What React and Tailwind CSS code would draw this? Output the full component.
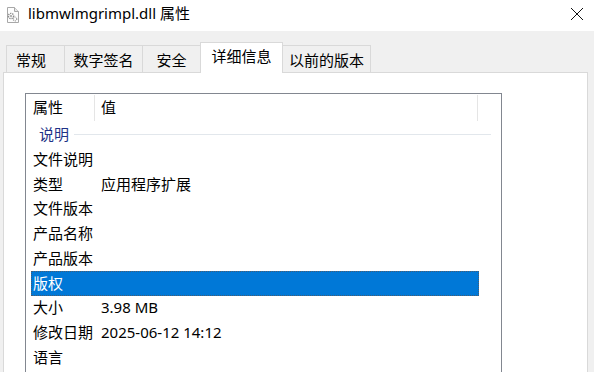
import React from "react";

const font = {
  fontFamily: '"Noto Sans", "Noto Sans CJK SC", sans-serif',
};

const tabs = [
  { label: "常规", w: "w-[59px] justify-start pl-[9px]" },
  { label: "数字签名", w: "w-[79px] justify-center" },
  { label: "安全", w: "w-[59px] justify-center" },
  { label: "详细信息", w: "w-[83px] justify-center", active: true },
  { label: "以前的版本", w: "w-[89px] justify-center" },
];

const rows = [
  ["文件说明", ""],
  ["类型", "应用程序扩展"],
  ["文件版本", ""],
  ["产品名称", ""],
  ["产品版本", ""],
  ["版权", "", true],
  ["大小", "3.98 MB"],
  ["修改日期", "2025-06-12 14:12"],
  ["语言", ""],
];

function DllIcon() {
  return (
    <svg width="14" height="16" viewBox="0 0 14 16">
      <path d="M1.5 0.5h7l4 4v11h-11z" fill="#fdfdfd" stroke="#a8a8a8" />
      <path d="M8.5 0.5v4h4" fill="#e8e8e8" stroke="#a8a8a8" />
      <circle cx="5" cy="9" r="2.6" fill="none" stroke="#8c8c8c" strokeWidth="1.4" strokeDasharray="1.3 0.9" />
      <circle cx="5" cy="9" r="1" fill="#9a9a9a" />
      <circle cx="9" cy="12" r="1.8" fill="none" stroke="#9c9c9c" strokeWidth="1.2" strokeDasharray="1 0.8" />
    </svg>
  );
}

export default function App() {
  return (
    <div
      className="w-[594px] h-[372px] overflow-hidden bg-[#f0f0f0] flex flex-col text-[15px] text-black"
      style={font}
    >
      {/* title bar */}
      <div className="h-[31px] bg-white flex items-center shrink-0">
        <div className="ml-[6px] mt-[-2px]">
          <DllIcon />
        </div>
        <span className="ml-[8px] mt-[-4px] leading-none">libmwlmgrimpl.dll 属性</span>
        <div className="ml-auto mr-[10px] mt-[-4px]">
          <svg width="14" height="14" viewBox="0 0 14 14">
            <path d="M1 1L13 13M13 1L1 13" stroke="#111" strokeWidth="1" />
          </svg>
        </div>
      </div>

      {/* tabs */}
      <div className="h-[41px] flex items-end pl-[6px] shrink-0">
        {tabs.map((t) =>
          t.active ? (
            <div
              key={t.label}
              className={`${t.w} h-[31px] bg-white border border-b-0 border-[#d9d9d9] -ml-px flex items-center leading-none relative z-10 -mb-px`}
            >
              <span className="mt-[-4px]">{t.label}</span>
            </div>
          ) : (
            <div
              key={t.label}
              className={`${t.w} h-[27px] border border-b-0 border-[#d9d9d9] -ml-px first:ml-0 flex items-center leading-none`}
            >
              <span className="mt-[2px]">{t.label}</span>
            </div>
          )
        )}
      </div>

      {/* page */}
      <div className="ml-[3px] w-[585px] flex-1 bg-white border border-[#d9d9d9] pl-[21px] pt-[20px]">
        <div className="w-[477px] h-[300px] border border-[#828790] bg-white">
          {/* header */}
          <div className="h-[27px] flex items-center">
            <div className="w-[69px] h-[26px] border-r border-[#e5e5e5] flex items-center pl-[7px] leading-none">
              属性
            </div>
            <div className="w-[383px] h-[26px] border-r border-[#e5e5e5] flex items-center pl-[6px] leading-none">
              值
            </div>
          </div>

          {/* group */}
          <div className="h-[26px] flex items-center pl-[13px] pr-[10px]">
            <span className="text-[#1e3287] leading-none">说明</span>
            <div className="flex-1 ml-[5px] h-px bg-[#e2e7ec]" />
          </div>

          {/* rows */}
          <div className="pl-[5px]">
            {rows.map(([k, v, sel]) => (
              <div
                key={k}
                className={
                  sel
                    ? "w-[448px] h-[24.75px] flex items-center leading-none bg-[#0078d7] text-white outline-1 outline-dotted outline-[#4a5d70] -outline-offset-1"
                    : "w-[448px] h-[24.75px] flex items-center leading-none"
                }
              >
                <div className="w-[70px] pl-[2px]">{k}</div>
                <div>{v}</div>
              </div>
            ))}
          </div>
        </div>
      </div>
    </div>
  );
}
